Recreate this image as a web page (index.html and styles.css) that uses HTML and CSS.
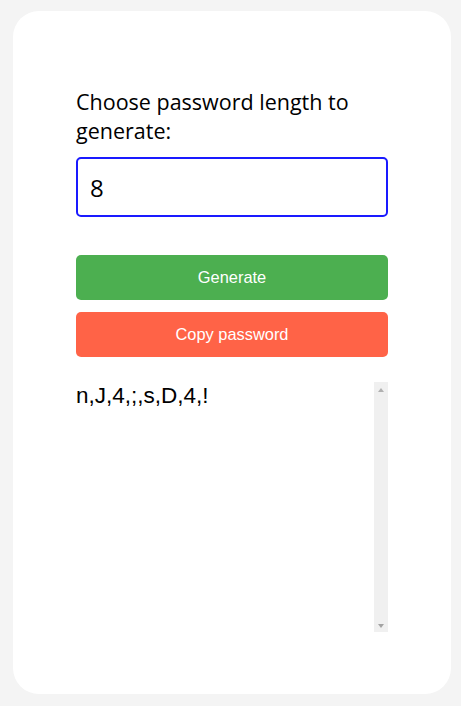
FILE: index.html
```html
<!DOCTYPE html>
<html lang="en">
<head>
<meta charset="utf-8">
<title>Password generator</title>
<link rel="stylesheet" href="styles.css">
</head>
<body>
<main class="card">
  <label class="label" for="len">Choose password length to generate:</label>
  <input class="len-input" id="len" type="number" value="8">
  <button class="btn btn-generate" type="button">Generate</button>
  <button class="btn btn-copy" type="button">Copy password</button>
  <div class="output-wrap">
    <textarea class="output" readonly>n,J,4,;,s,D,4,!</textarea>
    <div class="scrollbar" aria-hidden="true">
      <span class="arrow arrow-up"></span>
      <span class="arrow arrow-down"></span>
    </div>
  </div>
</main>
</body>
</html>
```
FILE: styles.css
```css
* { box-sizing: border-box; }
html, body { margin: 0; padding: 0; }
body {
  background: #f4f4f4;
  padding: 11px 10px 12px 13px;
  font-family: "Open Sans", "Noto Sans", sans-serif;
}
.card {
  width: 438px;
  height: 683px;
  background: #ffffff;
  border-radius: 26px;
  padding: 76px 63px 0 63px;
  display: flex;
  flex-direction: column;
}
.label {
  font-size: 21.5px;
  line-height: 29px;
  color: #000;
  margin-bottom: 12px;
}
.len-input {
  width: 312px;
  height: 60px;
  border: 2px solid #1a1aff;
  border-radius: 5px;
  outline: none;
  padding: 0 12px;
  font-family: "Open Sans", "Noto Sans", sans-serif;
  font-size: 24px;
  color: #000;
  -moz-appearance: textfield;
}
.len-input::-webkit-inner-spin-button,
.len-input::-webkit-outer-spin-button { -webkit-appearance: none; margin: 0; }
.btn {
  width: 312px;
  height: 45px;
  border: none;
  border-radius: 5px;
  color: #fff;
  font-family: "Liberation Sans", Arial, sans-serif;
  font-size: 16.4px;
  padding: 0;
}
.btn-generate { background: #4caf50; margin-top: 38px; }
.btn-copy { background: #ff6347; margin-top: 12px; }
.output-wrap {
  display: flex;
  width: 312px;
  height: 250px;
  margin-top: 25px;
}
.output {
  flex: 1;
  height: 100%;
  border: none;
  padding: 1px 0 0 0;
  resize: none;
  overflow: hidden;
  font-family: "Liberation Sans", Arial, sans-serif;
  font-size: 22.5px;
  color: #000;
  background: #fff;
  outline: none;
}
.scrollbar {
  width: 14px;
  background: #f0f0f0;
  display: flex;
  flex-direction: column;
  justify-content: space-between;
  align-items: center;
  padding: 6px 0 4px;
}
.arrow {
  width: 0;
  height: 0;
  border-left: 3.5px solid transparent;
  border-right: 3.5px solid transparent;
}
.arrow-up { border-bottom: 4px solid #b0b0b0; }
.arrow-down { border-top: 4px solid #a3a3a3; }
```
